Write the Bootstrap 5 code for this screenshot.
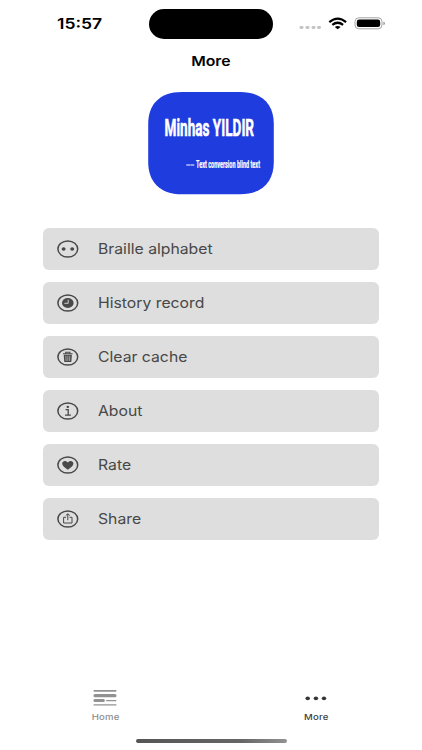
<!DOCTYPE html>
<html lang="en">
<head>
<meta charset="utf-8">
<meta name="viewport" content="width=device-width, initial-scale=1">
<title>More</title>
<link href="https://cdn.jsdelivr.net/npm/bootstrap@5.3.0/dist/css/bootstrap.min.css" rel="stylesheet">
<style>
body{font-family:Inter,"Liberation Sans",sans-serif;background:#fff;color:#000;height:750px;overflow:hidden}
svg{display:block;flex:none}
.status{height:48px;padding:9px 36px 0 57px}
.clock{font-size:15px;font-weight:600;line-height:30px;width:92px}
.wide{display:inline-block;transform-origin:0 50%;white-space:nowrap}
.clock .wide{transform:scaleX(1.17)}
.island{width:124px;height:30px;border-radius:15px;background:#000}
.screen-title{font-size:13.5px;font-weight:600;line-height:26px}
.screen-title .wide{transform:scaleX(1.17);transform-origin:50% 50%}
.logo{margin-top:17px}
.menu{margin:33px 43px 0;gap:12px}
.menu-item{height:42px;border-radius:6px;background:#dedede;color:#484848;padding-left:14px;font-size:14.3px;line-height:42px}
.menu-item svg{margin-right:19px}
.menu-item .wide{transform:scaleX(1.102)}
.tabs{height:63px;padding-top:13px}
.tab{color:#8e8e8e;font-size:8px;font-weight:500;line-height:12px;gap:4px}
.tab svg{margin-right:1px}
.tab .wide{transform:scaleX(1.2);transform-origin:50% 50%;letter-spacing:.2px}
.tab.current{color:#404040}
.home-bar{width:151px;height:4px;border-radius:2px;background:linear-gradient(90deg,#555,#666 70%,#929292);margin-bottom:7px}
</style>
<script src="https://cdn.jsdelivr.net/npm/bootstrap@5.3.0/dist/js/bootstrap.bundle.min.js"></script>
</head>
<body class="d-flex flex-column">
<header class="status d-flex align-items-start">
  <div class="clock"><span class="wide">15:57</span></div>
  <div class="island"></div>
  <svg class="ms-auto" width="88" height="30" viewBox="298 9 88 30">
    <g fill="#c4c4c4"><rect x="299.500" y="26" width="4" height="3" rx="1.400"/><rect x="305.500" y="26" width="4" height="3" rx="1.400"/><rect x="311.500" y="26" width="4" height="3" rx="1.400"/><rect x="317" y="26" width="4" height="3" rx="1.400"/></g>
    <g fill="none" stroke="#000" stroke-width="2.200"><path d="M329.300 22.200Q337.700 15.200 346.100 22.200"/><path d="M332.300 24.900Q337.700 20.600 343.100 24.900"/></g>
    <path d="M334.800 26.900Q337.700 24.900 340.600 26.900L337.700 29.200Z"/>
    <rect x="355" y="17.800" width="27" height="11" rx="3.800" fill="none" stroke="#a4a4a4"/>
    <rect x="356.800" y="19.600" width="23.400" height="7.400" rx="2.300"/>
    <path d="M383.400 21.400Q385 21.800 385 23.300Q385 24.800 383.400 25.200Z" fill="#999"/>
  </svg>
</header>
<h1 class="screen-title text-center m-0"><span class="wide">More</span></h1>
<svg class="logo mx-auto" width="126" height="104" viewBox="148 91 126 104">
  <path fill="#1f3cde" d="M182 92H240C263 92 273.800 105 273.800 124V162C273.800 181 263 194.300 240 194.300H182C159 194.300 148.200 181 148.200 162V124C148.200 105 159 92 182 92Z"/>
  <g fill="#fff" stroke="#fff" font-family="Roboto,sans-serif" font-weight="700">
    <text transform="translate(164.600 136) scale(.5625 1)" font-size="24.500" stroke-width=".6" textLength="159" lengthAdjust="spacingAndGlyphs">Minhas YILDIR</text>
    <text transform="translate(196 168.300) scale(.5 1)" font-size="10.500" stroke-width=".2" textLength="128" lengthAdjust="spacingAndGlyphs">Text conversion blind text</text>
    <path stroke="none" d="M186.300 164.400h3.700v1.200h-3.700zM190.300 164.400h4v1.200h-4z"/>
  </g>
</svg>
<main class="menu d-flex flex-column">
  <div class="menu-item d-flex align-items-center"><svg width="22" height="18" viewBox="0 0 22 18"><ellipse cx="10.800" cy="9" rx="9.900" ry="8.100" fill="none" stroke="#484848" stroke-width="1.500"/><ellipse cx="6.600" cy="9" rx="2" ry="1.700" fill="#484848"/><ellipse cx="15.200" cy="9" rx="2" ry="1.700" fill="#484848"/></svg><span class="wide">Braille alphabet</span></div>
  <div class="menu-item d-flex align-items-center"><svg width="22" height="18" viewBox="0 0 22 18"><ellipse cx="10.800" cy="9" rx="9.900" ry="8.100" fill="none" stroke="#484848" stroke-width="1.500"/><ellipse cx="10.800" cy="9" rx="5.800" ry="4.900" fill="#484848"/><path d="M11.200 5.700V9.300H7.400" fill="none" stroke="#dedede" stroke-width=".9"/></svg><span class="wide">History record</span></div>
  <div class="menu-item d-flex align-items-center"><svg width="22" height="18" viewBox="0 0 22 18"><ellipse cx="10.800" cy="9" rx="9.900" ry="8.100" fill="none" stroke="#484848" stroke-width="1.500"/><path d="M6 5.800H15.600M8.700 5.500V4.200H12.900V5.500" fill="none" stroke="#484848" stroke-width="1.100"/><path d="M6.700 6.700H14.900L14.300 14H7.300Z" fill="#484848"/><path d="M8.800 7.700L9.100 12.900M10.800 7.700V12.900M12.800 7.700L12.500 12.900" stroke="#dedede" stroke-width=".6"/></svg><span class="wide">Clear cache</span></div>
  <div class="menu-item d-flex align-items-center"><svg width="22" height="18" viewBox="0 0 22 18"><ellipse cx="10.800" cy="9" rx="9.900" ry="8.100" fill="none" stroke="#484848" stroke-width="1.500"/><ellipse cx="10.800" cy="4.900" rx="1.300" ry="1.100" fill="#484848"/><path d="M8.600 7.700H11.200V13M8 13.100H13.900" fill="none" stroke="#484848" stroke-width="1.300"/></svg><span class="wide">About</span></div>
  <div class="menu-item d-flex align-items-center"><svg width="22" height="18" viewBox="0 0 22 18"><ellipse cx="10.800" cy="9" rx="9.900" ry="8.100" fill="none" stroke="#484848" stroke-width="1.500"/><path d="M10.800 13.700C8 12 5.200 10 5.200 7.600C5.200 4.500 9.300 4 10.800 6.500C12.300 4 16.400 4.500 16.400 7.600C16.400 10 13.600 12 10.800 13.700Z" fill="#484848"/></svg><span class="wide">Rate</span></div>
  <div class="menu-item d-flex align-items-center"><svg width="22" height="18" viewBox="0 0 22 18"><ellipse cx="10.800" cy="9" rx="9.900" ry="8.100" fill="none" stroke="#484848" stroke-width="1.500"/><path d="M9 7.300H6.600V13H15V7.300H12.600M10.800 10.200V4M8.800 5.500L10.800 3.800L12.800 5.500" fill="none" stroke="#484848" stroke-width="1"/></svg><span class="wide">Share</span></div>
</main>
<nav class="tabs d-flex mt-auto">
  <div class="tab d-flex flex-column align-items-center w-50"><svg width="24" height="18" viewBox="0 0 24 18" fill="#929292"><rect x=".5" y=".9" width="23" height="1.800" rx=".8"/><rect x=".5" y="5" width="23" height="3.200" rx="1.500"/><rect x=".5" y="10" width="11.300" height="3.100" rx="1.400"/><rect x="13" y="10.900" width="10.500" height="1.300" rx=".6"/><rect x=".5" y="15.300" width="23" height="1.200" rx=".6"/></svg><span class="wide">Home</span></div>
  <div class="tab current d-flex flex-column align-items-center w-50"><svg width="24" height="18" viewBox="0 0 24 18" fill="#363636"><ellipse cx="3.700" cy="9.300" rx="2.200" ry="1.900"/><ellipse cx="11.900" cy="9.300" rx="2.200" ry="1.900"/><ellipse cx="20" cy="9.300" rx="2.200" ry="1.900"/></svg><span class="wide">More</span></div>
</nav>
<div class="home-bar mx-auto"></div>
</body>
</html>
